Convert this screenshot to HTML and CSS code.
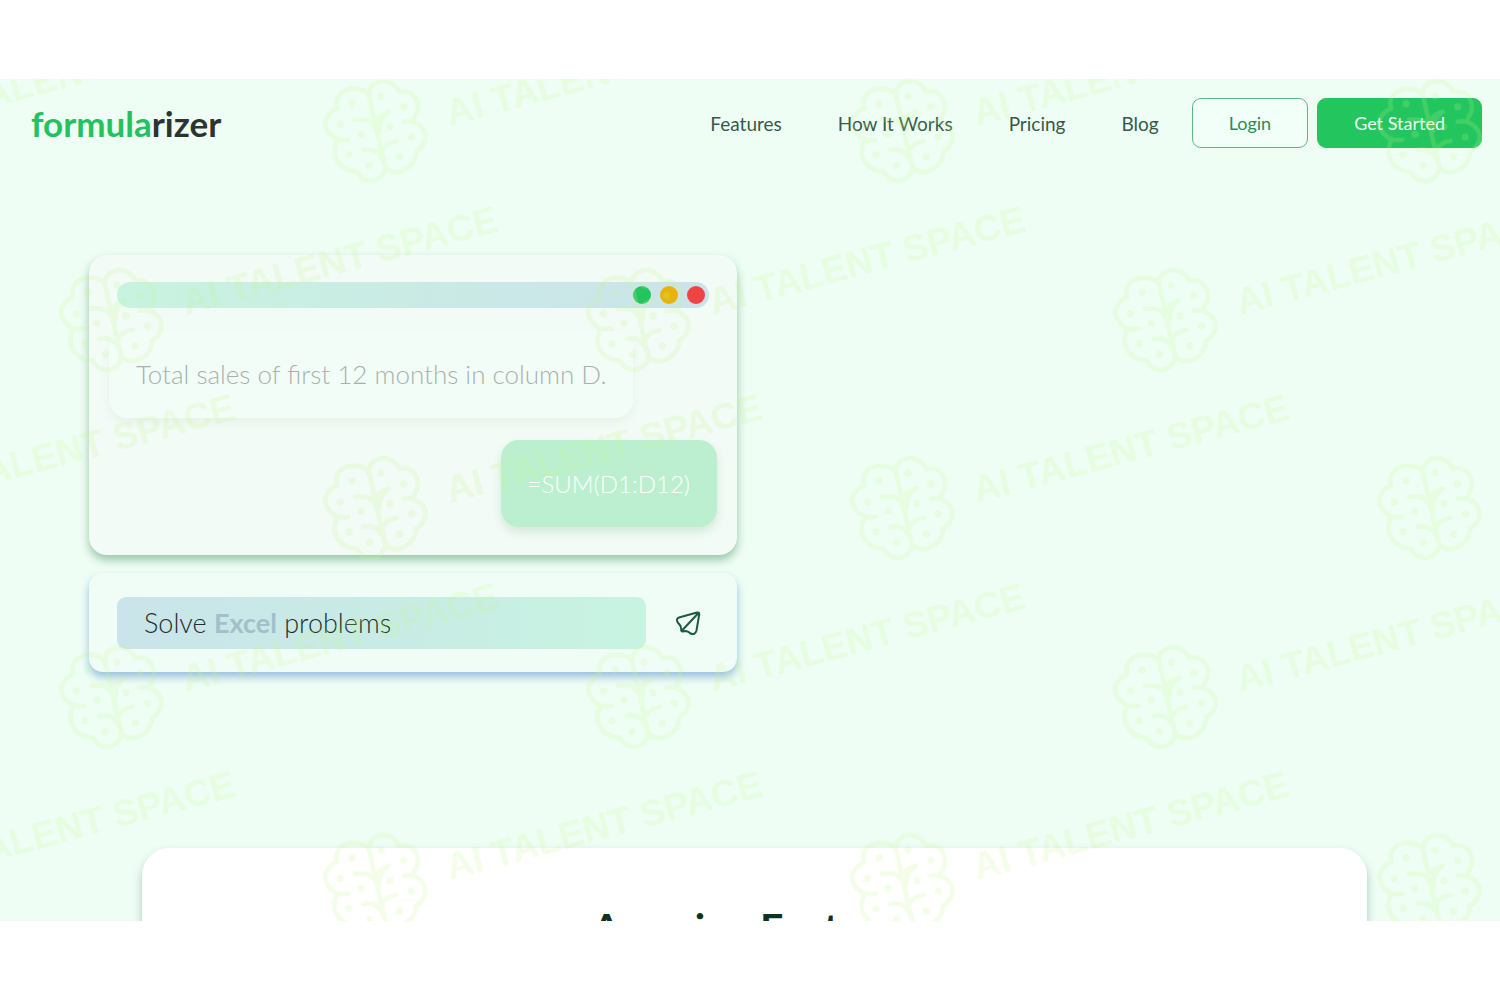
FILE: index.html
```html
<!DOCTYPE html>
<html lang="en">
<head>
    <meta charset="UTF-8">
    <meta name="viewport" content="width=device-width, initial-scale=1.0">
    <title>Formularizer</title>
    <link rel="stylesheet" href="styles.css">
</head>
<body>

<div class="page">
    <header class="header">
        <a href="#" class="logo"><span>formula</span>rizer</a>
        <nav class="nav">
            <a href="#features">Features</a>
            <a href="#how">How It Works</a>
            <a href="#pricing">Pricing</a>
            <a href="#blog">Blog</a>
        </nav>
        <div class="actions">
            <button class="btn btn-outline">Login</button>
            <button class="btn btn-primary">Get Started</button>
        </div>
    </header>

    <main>
        <section class="hero">
            <div class="demo">
                <div class="window">
                    <div class="window-bar">
                        <span class="dot green"></span>
                        <span class="dot yellow"></span>
                        <span class="dot red"></span>
                    </div>
                    <div class="chat">
                        <p class="bubble question">Total sales of first 12 months in column D.</p>
                        <p class="bubble answer">=SUM(D1:D12)</p>
                    </div>
                </div>

                <div class="prompt">
                    <div class="prompt-text">Solve <span>Excel</span> problems</div>
                    <button class="send" aria-label="Send">
                        <svg width="26" height="26" viewBox="0 0 26 26">
                            <path d="M4 7.500 L22 2.500 Q24.500 2 24.200 4.500 L21.500 20.500 Q20 25.500 15.500 23.500 Q13.500 21.500 11 21 L7.500 21.500 Q6 21.500 6.200 19.500 Q6.500 16.500 4.500 14.500 Q-0.500 9.500 4 7.500 Z M7 20.500 L23 3.500"/>
                        </svg>
                    </button>
                </div>
            </div>
        </section>

        <section class="features" id="features">
            <h2>Amazing Features</h2>
        </section>
    </main>

    <svg class="watermark" aria-hidden="true">
        <defs>
            <g id="mark">
                <g transform="scale(0.333) translate(-230 -240)">
                    <path d="M207 130 C212 82 275 75 300 122 C345 112 372 162 345 200 M313 212 C350 203 385 235 378 265 C374 285 362 295 350 302 C350 345 300 382 258 352 C245 398 195 403 172 362 C130 360 88 325 113 270 M147 266 C95 275 65 225 82 200 C90 183 105 175 113 172 C100 125 150 95 207 125"/>
                    <path d="M207 125 L246 300 Q254 325 258 352 M167 206 H195 Q216 208 226 226 M268 182 Q232 192 230 222 M268 182 Q236 205 240 240 M192 297 Q240 285 258 345 M292 270 Q260 272 248 300"/>
                    <g class="nodes">
                        <circle cx="158" cy="158" r="11"/>
                        <circle cx="245" cy="135" r="11"/>
                        <circle cx="313" cy="167" r="11"/>
                        <circle cx="123" cy="221" r="11"/>
                        <circle cx="185" cy="250" r="11"/>
                        <circle cx="272" cy="227" r="11"/>
                        <circle cx="336" cy="258" r="11"/>
                        <circle cx="149" cy="311" r="11"/>
                        <circle cx="210" cy="343" r="11"/>
                        <circle cx="300" cy="318" r="11"/>
                    </g>
                </g>
                <text transform="translate(74 -5) rotate(-15)">AI TALENT SPACE</text>
            </g>
            <g id="row">
                <use href="#mark" x="-151"/>
                <use href="#mark" x="376"/>
                <use href="#mark" x="903"/>
                <use href="#mark" x="1430"/>
            </g>
        </defs>
        <g class="marks">
            <use href="#row" y="52"/>
            <use href="#row" x="-264" y="241"/>
            <use href="#row" y="429"/>
            <use href="#row" x="-264" y="618"/>
            <use href="#row" y="806"/>
        </g>
    </svg>
</div>

</body>
</html>
```
FILE: styles.css
```css
* {
    box-sizing: border-box;
}

body {
    margin: 0;
    padding: 79px 0;
    height: 100vh;
    background-color: #ffffff;
    color: #1f2f2a;
    font-family: Lato, "Liberation Sans", sans-serif;
}

.page {
    position: relative;
    height: 100%;
    overflow: hidden;
    background-color: #effef5;
}

.header {
    display: flex;
    align-items: center;
    padding: 19px 18px 18px 31px;
}

.logo {
    margin-right: auto;
    font-size: 35px;
    line-height: 50px;
    font-weight: bold;
    color: #2b3431;
    text-decoration: none;
}

.logo span {
    color: #27c060;
}

.nav {
    display: flex;
    gap: 56px;
    margin-right: 33px;
}

.nav a {
    font-size: 19px;
    color: #36594a;
    text-decoration: none;
}

.actions {
    display: flex;
    gap: 9px;
}

.btn {
    height: 50px;
    padding: 0 36px;
    border: 1px solid #58b986;
    border-radius: 9px;
    font-family: inherit;
    font-size: 18px;
    cursor: pointer;
}

.btn-outline {
    background-color: #f2fff8;
    color: #2f8a58;
}

.btn-primary {
    background-color: #22c55e;
    border-color: #22c55e;
    color: #ecfff2;
}

.hero {
    display: grid;
    grid-template-columns: 1fr 1fr;
    gap: 26px;
    padding: 89px 89px 176px;
}

.demo {
    display: flex;
    flex-direction: column;
    gap: 18px;
}

.window {
    padding: 27px 20px 28px;
    border-radius: 18px;
    background-color: #f2fbf5;
    box-shadow: 0 5px 10px rgba(40, 130, 70, 0.45);
}

.window-bar {
    display: flex;
    justify-content: flex-end;
    align-items: center;
    gap: 9px;
    height: 26px;
    margin: 0 8px;
    padding-right: 4px;
    border-radius: 13px;
    background: linear-gradient(to right, #c8f3e0, #cbe3e9);
}

.dot {
    width: 18px;
    height: 18px;
    border-radius: 50%;
}

.green {
    background-color: #22c55e;
}

.yellow {
    background-color: #eab308;
}

.red {
    background-color: #ef4444;
}

.chat {
    display: flex;
    flex-direction: column;
    gap: 22px;
    padding-top: 23px;
}

.bubble {
    margin: 0;
    padding: 27px;
    border-radius: 18px;
    font-size: 26px;
    line-height: 33px;
    font-weight: 300;
}

.question {
    align-self: flex-start;
    background-color: #f3fdf7;
    color: #a6b3ad;
    box-shadow: 0 5px 10px rgba(80, 110, 90, 0.06);
}

.answer {
    align-self: flex-end;
    background-color: #bbefcf;
    color: #ffffff;
    font-size: 24px;
    box-shadow: 0 5px 10px rgba(40, 130, 70, 0.15);
}

.prompt {
    display: flex;
    align-items: center;
    justify-content: space-between;
    padding: 24px 34px 23px 28px;
    border-radius: 14px;
    background-color: #f0fdf6;
    box-shadow: 0 5px 8px rgba(80, 140, 200, 0.55);
}

.prompt-text {
    flex: 1;
    margin-right: 29px;
    padding: 0 27px;
    border-radius: 9px;
    background: linear-gradient(to right, #c9e4ea, #c8f3e1);
    font-size: 27px;
    line-height: 52px;
    font-weight: 300;
}

.prompt-text span {
    font-weight: bold;
    color: #a2c0cb;
}

.send {
    width: 28px;
    height: 28px;
    padding: 0;
    border: none;
    background: none;
    cursor: pointer;
}

.send svg {
    display: block;
    fill: none;
    stroke: #1d5a46;
    stroke-width: 2;
    stroke-linejoin: round;
}

.features {
    margin: 0 133px 0 142px;
    padding: 53px 27px;
    border-radius: 27px;
    background-color: #ffffff;
    box-shadow: 0 5px 10px rgba(20, 80, 50, 0.3);
}

.features h2 {
    margin: 0;
    font-size: 41px;
    line-height: 54px;
    text-align: center;
    color: #0d3323;
}

.watermark {
    position: absolute;
    top: 0;
    left: 0;
    width: 100%;
    height: 100%;
    pointer-events: none;
}

.marks {
    opacity: 0.2;
}

.watermark path {
    fill: none;
    stroke: #c4f78b;
    stroke-width: 14;
    stroke-linecap: round;
}

.nodes,
.watermark text {
    fill: #c4f78b;
}

.watermark text {
    font-family: "Liberation Sans", sans-serif;
    font-size: 37px;
    font-weight: bold;
}
```
